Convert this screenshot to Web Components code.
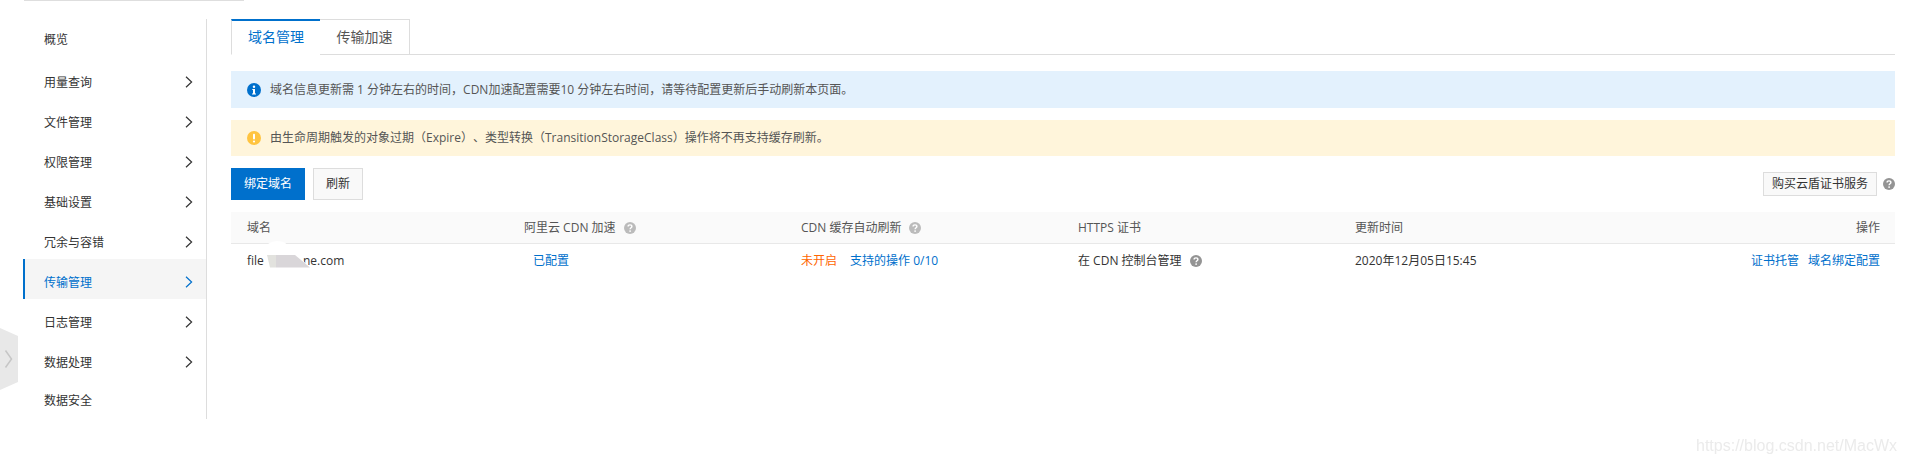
<!DOCTYPE html>
<html lang="zh-CN"><head><meta charset="utf-8"><title>域名管理</title>
<style>
html,body{margin:0;padding:0;background:#fff;height:462px;overflow:hidden}
body{font:12px/18px "Open Sans","Noto Sans CJK SC",sans-serif;color:#333;text-spacing-trim:space-all}
</style></head><body>
<oss-page>
  <oss-sidebar slot="side">
    <oss-nav leaf>概览</oss-nav>
    <oss-nav>用量查询</oss-nav>
    <oss-nav>文件管理</oss-nav>
    <oss-nav>权限管理</oss-nav>
    <oss-nav>基础设置</oss-nav>
    <oss-nav>冗余与容错</oss-nav>
    <oss-nav active>传输管理</oss-nav>
    <oss-nav>日志管理</oss-nav>
    <oss-nav>数据处理</oss-nav>
    <oss-nav leaf tail>数据安全</oss-nav>
  </oss-sidebar>
  <oss-tabs><oss-tab active>域名管理</oss-tab><oss-tab>传输加速</oss-tab></oss-tabs>
  <oss-alert type="info">域名信息更新需 1 分钟左右的时间，CDN加速配置需要10 分钟左右时间，请等待配置更新后手动刷新本页面。</oss-alert>
  <oss-alert type="warn">由生命周期触发的对象过期（Expire）、类型转换（TransitionStorageClass）操作将不再支持缓存刷新。</oss-alert>
  <oss-toolbar>
    <oss-button primary>绑定域名</oss-button>
    <oss-button>刷新</oss-button>
    <span slot="end" style="display:contents"><oss-button small>购买云盾证书服务</oss-button><oss-help dark style="margin-left:0"></oss-help></span>
  </oss-toolbar>
  <oss-table>
    <oss-row head>
      <span>域名</span>
      <span>阿里云 CDN 加速<oss-help></oss-help></span>
      <span>CDN 缓存自动刷新<oss-help></oss-help></span>
      <span>HTTPS 证书</span>
      <span>更新时间</span>
      <span slot="end">操作</span>
    </oss-row>
    <oss-row>
      <span>file.<oss-blur></oss-blur>ne.com</span>
      <span style="padding-left:25px"><oss-link>已配置</oss-link></span>
      <span style="display:flex;gap:13px"><span style="color:#f60">未开启</span><oss-link>支持的操作 0/10</oss-link></span>
      <span>在 CDN 控制台管理<oss-help dark></oss-help></span>
      <span>2020年12月05日15:45</span>
      <span slot="end" style="display:flex;gap:9px;justify-content:flex-end"><oss-link>证书托管</oss-link><oss-link>域名绑定配置</oss-link></span>
    </oss-row>
  </oss-table>
</oss-page>
<script>
const def=(name,html,init)=>customElements.define(name,class extends HTMLElement{
  constructor(){super();this.attachShadow({mode:'open'}).innerHTML=html;}
  connectedCallback(){init&&init(this);}
});
def('oss-page',`<style>
:host{display:block;position:relative;height:462px;box-sizing:border-box}
.rule{height:1px;width:220px;margin-left:24px;background:#dedede}
.wrap{display:flex;gap:24px;margin:18px 11px 0 23px}
main{flex:1;min-width:0;display:flex;flex-direction:column}
.handle{position:absolute;left:0;top:328px;width:18px;height:62px}
.mark{position:absolute;right:9px;top:436px;font:16px/20px "Liberation Sans",sans-serif;color:#ebebeb;filter:blur(.4px)}
</style>
<div class="rule"></div>
<div class="wrap"><slot name="side"></slot><main><slot></slot></main></div>
<svg class="handle" viewBox="0 0 18 62"><path d="M0 0L18 8V54L0 62Z" fill="#e8e8e8"/><path d="M5.500 22.500L11.500 31L5.500 39.500" fill="none" stroke="#c6c6c6" stroke-width="1.500"/></svg>
<div class="mark">https://blog.csdn.net/MacWx</div>`);
def('oss-sidebar',`<style>:host{display:block;width:184px;height:400px;box-sizing:border-box;border-right:1px solid #ddd;flex:none}</style><slot></slot>`);
def('oss-nav',`<style>
:host{display:flex;box-sizing:border-box;height:40px;padding:8px 13px 0 21px;align-items:center;justify-content:space-between;color:#333;border-left:0 solid #0070cc}
:host([leaf]){padding-top:2px}
:host([tail]){padding-top:4px}
:host([active]){background:#f5f5f5;color:#0070cc;border-left-width:2px;padding-left:19px}
svg{width:8px;height:12px;margin-top:-3px}
:host([leaf]) svg{display:none}
</style><slot></slot><svg viewBox="0 0 8 12"><path d="M1 .8L6.600 6L1 11.200" fill="none" stroke="currentColor" stroke-width="1.200"/></svg>`);
def('oss-tabs',`<style>:host{display:flex;height:36px;box-sizing:border-box;border-bottom:1px solid #ddd;margin-bottom:16px}</style><slot></slot>`);
def('oss-tab',`<style>
:host{display:block;box-sizing:border-box;height:36px;width:90px;border:1px solid #ddd;border-left:0;border-top-width:1px;text-align:center;font-size:14px;line-height:33px;color:#555;background:#fff}
:host([active]){width:89px;border-top:2px solid #0070cc;border-left:1px solid #ddd;border-right:0;border-bottom-color:#fff;color:#0070cc;line-height:32px}
</style><slot></slot>`);
def('oss-alert',`<style>
:host{display:flex;align-items:center;box-sizing:border-box;height:37px;padding:0 16px;margin-bottom:12px;color:#555;background:#e3f1fd}
:host([type=warn]){height:36px;background:#fff5db}
svg{width:14px;height:14px;margin-right:9px;flex:none}
</style><span id="i" style="display:contents"></span><slot></slot>`,el=>{
  el.shadowRoot.getElementById('i').innerHTML=el.getAttribute('type')==='warn'
   ?'<svg viewBox="0 0 14 14"><circle cx="7" cy="7" r="7" fill="#ffc440"/><rect x="6" y="2.800" width="2" height="5.600" rx=".8" fill="#fff"/><circle cx="7" cy="10.500" r="1.100" fill="#fff"/></svg>'
   :'<svg viewBox="0 0 14 14"><circle cx="7" cy="7" r="7" fill="#0070cc"/><circle cx="7" cy="3.700" r="1.200" fill="#fff"/><path d="M5.300 5.900H8V10.400H9V11.400H5V10.400H6V6.900H5.300Z" fill="#fff"/></svg>';
});
def('oss-toolbar',`<style>
:host{display:flex;align-items:center;height:32px;margin-bottom:12px;gap:8px}
.end{margin-left:auto;display:flex;align-items:center;gap:6px}
</style><slot></slot><div class="end"><slot name="end"></slot></div>`);
def('oss-button',`<style>
:host{display:inline-flex;align-items:center;justify-content:center;box-sizing:border-box;height:32px;padding:0 12px;border:1px solid #ddd;background:#f9f9f9;color:#333}
:host([primary]){background:#0070cc;border-color:#0070cc;color:#fff}
:host([small]){height:24px;padding:0 8px}
</style><slot></slot>`);
def('oss-table',`<style>:host{display:block}</style><slot></slot>`);
def('oss-row',`<style>
:host{display:grid;grid-template-columns:repeat(5,277px) 1fr;align-items:center;height:33px;box-sizing:border-box;color:#333}
:host([head]){height:32px;background:#fafafa;border-bottom:1px solid #e8e8e8;color:#555}
::slotted(*){padding-left:16px;white-space:nowrap}
::slotted([slot=end]){grid-column:6;padding:0 15px 0 0;text-align:right}
</style><slot></slot><slot name="end"></slot>`);
def('oss-link',`<style>:host{color:#0070cc}</style><slot></slot>`);
def('oss-help',`<style>
:host{display:inline-block;width:12px;height:12px;margin-left:8px;vertical-align:-2px;color:#bbb}
:host([dark]){color:#949494}
svg{display:block;width:12px;height:12px}
</style><svg viewBox="0 0 12 12"><circle cx="6" cy="6" r="6" fill="currentColor"/><path d="M4.100 4.600C4.100 3.500 5 2.900 6 2.900C7.100 2.900 7.900 3.500 7.900 4.500C7.900 5.700 6.100 5.800 6.100 7.200" fill="none" stroke="#fff" stroke-width="1.400"/><circle cx="6.100" cy="9.100" r=".9" fill="#fff"/></svg>`);
def('oss-blur',`<style>
:host{display:inline-block;position:relative;width:36px;height:12px}
svg{position:absolute;left:-4px;top:-12px;width:50px;height:28px}
</style><svg viewBox="0 0 50 28"><defs><filter id="b"><feGaussianBlur stdDeviation=".6"/></filter></defs><g filter="url(#b)"><path d="M1 28V10Q4 0 14 0Q24 0 27 8L49 28Z" fill="#fff"/><path d="M4 14H13V26.500H7Z" fill="#e2e2de"/><path d="M13 14H32L47 26.500H13Z" fill="#d9d6d9"/></g></svg>`);
</script>
</body></html>
